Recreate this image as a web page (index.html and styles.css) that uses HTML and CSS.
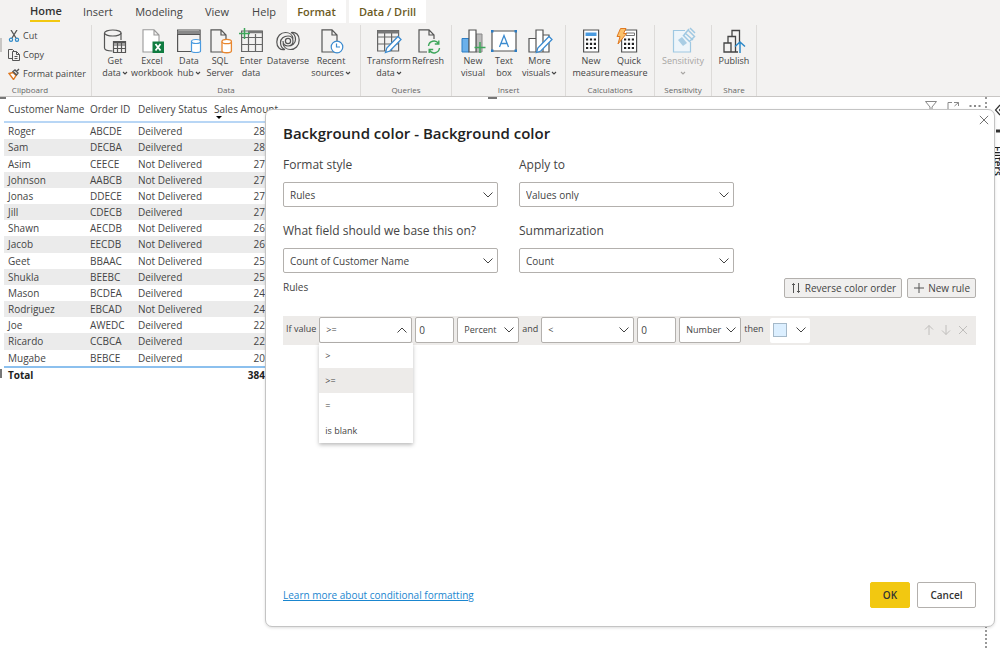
FILE: index.html
```html
<!DOCTYPE html>
<html lang="en">
<head>
<meta charset="utf-8">
<title>Conditional formatting</title>
<link rel="stylesheet" href="styles.css">
</head>
<body>
<svg class="defs" aria-hidden="true">
  <symbol id="chev" viewBox="0 0 12 12"><path d="M1.500 3.500 6 8l4.500-4.500" fill="none" stroke="currentColor"/></symbol>
  <symbol id="chev-up" viewBox="0 0 12 12"><path d="M1.500 8.500 6 4l4.500 4.500" fill="none" stroke="currentColor"/></symbol>
  <symbol id="caret" viewBox="0 0 6 6"><path d="M1 2l2 2 2-2" fill="none" stroke="currentColor" stroke-width="1.100"/></symbol>
</svg>
<header class="ribbon">
  <nav class="tabs" aria-label="Ribbon tabs">
    <button class="tab tab-home">Home</button>
    <button class="tab tab-insert">Insert</button>
    <button class="tab tab-model">Modeling</button>
    <button class="tab tab-view">View</button>
    <button class="tab tab-help">Help</button>
    <button class="tab ctx ctx-format">Format</button>
    <button class="tab ctx ctx-data">Data / Drill</button>
  </nav>
  <div class="groups">
    <section class="group clipboard">
      <span class="paste-edge"></span>
      <div class="stack">
        <button class="mini"><svg viewBox="0 0 12 12"><path d="M3 0l5 8M9 0L4 8" stroke="#555" stroke-width="1.300" fill="none"/><circle cx="3" cy="9.800" r="1.600" stroke="#2b88c8" fill="none" stroke-width="1.200"/><circle cx="9" cy="9.800" r="1.600" stroke="#2b88c8" fill="none" stroke-width="1.200"/></svg>Cut</button>
        <button class="mini"><svg viewBox="0 0 12 12"><path d="M4 9.500H.5V.5h4l1.500 1.500M4.500 2.500h4l3 3v6h-7zM8.500 2.500v3h3M6.500 7.500h3M6.500 9.500h3" stroke="#555" fill="none"/></svg>Copy</button>
        <button class="mini"><svg viewBox="0 0 12 12"><path d="M1 5.500l4-1 3 3-2.500 4z" fill="#fff" stroke="#e07820" stroke-width="1.400"/><path d="M5 3.500l3.500 3.500 1.500-2L7 2zM8.500 3.500L11 1" stroke="#555" fill="none" stroke-width="1.400"/></svg>Format painter</button>
      </div>
      <h2>Clipboard</h2>
    </section>
    <section class="group">
      <div class="tools">
        <button class="tool w30"><svg viewBox="0 0 24 24"><g fill="none" stroke="#555" stroke-width="1.200"><path d="M1.500 4v15c0 2 4 3 8 3M18 4v7"/><ellipse cx="9.800" cy="4" rx="8.300" ry="3"/><path d="M10.500 12.500h12v11h-12zM10.500 16h12M10.500 19.500h12M14.500 12.500v11M18.500 12.500v11"/></g><path d="M10.500 12h12v2.500h-12z" fill="#555"/></svg><span>Get<br>data<svg class="caret"><use href="#caret"/></svg></span></button>
        <button class="tool w44"><svg viewBox="0 0 24 24"><path d="M3 .8h11l5 5.200v17H3zM14 1v5h5" fill="#fff" stroke="#999" stroke-width="1.100"/><path d="M12.500 12.500H24V24H12.500z" fill="#107c41"/><path d="M15.500 15l5 6.500M20.500 15l-5 6.500" stroke="#fff" stroke-width="1.800"/></svg><span>Excel<br>workbook</span></button>
        <button class="tool w30"><svg viewBox="0 0 24 24"><g fill="#f3f2f1" stroke="#555" stroke-width="1.200"><path d="M.6 1h22.500v21.500H.6zM.6 5.500h22.500"/><path d="M.6 3.500h22.500" stroke-width="3" stroke="#888"/></g><path d="M14.500 12.500V22c0 2 9 2 9 0v-9.500" fill="#fff" stroke="#4a9be0" stroke-width="1.200"/><ellipse cx="19" cy="12.500" rx="4.500" ry="2" fill="#fff" stroke="#4a9be0" stroke-width="1.200"/></svg><span>Data<br>hub<svg class="caret"><use href="#caret"/></svg></span></button>
        <button class="tool w32"><svg viewBox="0 0 24 24"><path d="M3 .8h10l5 5.200v17H3zM13 1v5h5" fill="none" stroke="#555" stroke-width="1.200"/><path d="M14 12.500V22c0 2.300 9.400 2.300 9.400 0v-9.500" fill="#fff" stroke="#e8862e" stroke-width="1.300"/><ellipse cx="18.700" cy="12.500" rx="4.700" ry="2.200" fill="#fff" stroke="#e8862e" stroke-width="1.300"/></svg><span>SQL<br>Server</span></button>
        <button class="tool w30"><svg viewBox="0 0 24 24"><path d="M2.600 2h20.800v20.500H2.600zM2.600 8.500h20.800M2.600 15.500h20.800M9.500 5v17.500M16.500 5v17.500" fill="none" stroke="#666" stroke-width="1.200"/><path d="M9 3h14" stroke="#777" stroke-width="2.500"/><path d="M5.500-1v11M0 4.500h11" stroke="#3fa65b" stroke-width="1.500"/></svg><span>Enter<br>data</span></button>
        <button class="tool w44"><svg viewBox="0 0 24 24"><g fill="none" stroke="#555" stroke-width="1.200"><path d="M9 20.500C4 21.500.8 18 .8 13 .8 7 5 3.500 9.500 3.500c4 0 7 2.500 7.500 6M15 3.500c5-1 8.200 2.500 8.200 7.500 0 6-4.200 9.500-8.700 9.500-4 0-7-2.500-7.500-6"/><path d="M9 20.500c-3-1-4.500-3.500-4.500-7C4.500 9.500 8 7 12 7c3 0 5 2 5 5s-2 5-5 5-5-2-5-5M15 3.500c3 1 4.500 3.500 4.500 7 0 4-3.500 6.500-7.500 6.500"/><circle cx="12" cy="12" r="2.600"/></g></svg><span>Dataverse</span></button>
        <button class="tool w42"><svg viewBox="0 0 24 24"><path d="M3 .8h10l5 5.200v17H3zM13 1v5h5" fill="none" stroke="#555" stroke-width="1.200"/><circle cx="18" cy="18" r="5.800" fill="#fff" stroke="#3b8bd0" stroke-width="1.200"/><path d="M17.500 14.500V18h3.500" fill="none" stroke="#3b8bd0" stroke-width="1.200"/></svg><span>Recent<br>sources<svg class="caret"><use href="#caret"/></svg></span></button>
      </div>
      <h2>Data</h2>
    </section>
    <section class="group snug">
      <div class="tools">
        <button class="tool w44"><svg viewBox="0 0 24 24"><path d="M.6 1.500h21v20.500H.6zM.6 8h21M.6 15h21M7.600 4v18M14.600 4v18" fill="none" stroke="#666" stroke-width="1.200"/><path d="M.6 3h21" stroke="#777" stroke-width="3"/><path d="M8.500 23.500l1.300-4.500L21 7.500l3 3L12.800 22z" fill="#fff" stroke="#3b8bd0" stroke-width="1.300"/></svg><span>Transform<br>data<svg class="caret"><use href="#caret"/></svg></span></button>
        <button class="tool w34"><svg viewBox="0 0 24 24"><path d="M3 .8h10l5 5.200v17H3zM13 1v5h5" fill="#f3f2f1" stroke="#555" stroke-width="1.200"/><path d="M11 10h13v14H11z" fill="#f3f2f1"/><path d="M12.500 17a5.500 5.500 0 0110-2.500M22.800 11.500v3.500h-4M23.500 19a5.500 5.500 0 01-10 2.500M13.200 24v-3.500h4" fill="none" stroke="#3fa65b" stroke-width="1.400"/></svg><span>Refresh</span></button>
      </div>
      <h2>Queries</h2>
    </section>
    <section class="group snug">
      <div class="tools">
        <button class="tool w30"><svg viewBox="0 0 24 24"><path d="M1 9.500h7V23H1z" fill="#6bb0ea" stroke="#2b7cc4"/><path d="M15 5h6v18h-6z" fill="#bbb" stroke="#888"/><path d="M8 1h7v22H8z" fill="#fff" stroke="#555" stroke-width="1.200"/><path d="M19 13v11M13.500 18.500h11" stroke="#3fa65b" stroke-width="1.500"/></svg><span>New<br>visual</span></button>
        <button class="tool w32"><svg viewBox="0 0 24 24"><path d="M0 2h24v20H0z" fill="#fff" stroke="#555" stroke-width="1.200"/><path d="M7.500 18L12 6.500 16.500 18M9 14.500h6" fill="none" stroke="#3b8bd0" stroke-width="1.300"/><path d="M-1 1h2.500v2.500H-1zM22.500 1H25v2.500h-2.500zM-1 20.500h2.500V23H-1zM22.500 20.500H25V23h-2.500z" fill="#2b7cc4"/></svg><span>Text<br>box</span></button>
        <button class="tool w39"><svg viewBox="0 0 24 24"><path d="M1 9.500h7V23H1zM8 1h7v22H8zM15 6h6v17h-6z" fill="#fff" stroke="#555" stroke-width="1.200"/><path d="M8.500 23.500l1.300-4.500L21 7.500l3 3L12.800 22z" fill="#fff" stroke="#3b8bd0" stroke-width="1.300"/></svg><span>More<br>visuals<svg class="caret"><use href="#caret"/></svg></span></button>
      </div>
      <h2>Insert</h2>
    </section>
    <section class="group snug">
      <div class="tools">
        <button class="tool w38"><svg viewBox="0 0 24 24"><path d="M4.600 1h15v22h-15z" fill="#fff" stroke="#555" stroke-width="1.200"/><path d="M6.500 3.500h11V7h-11z" fill="#4a9be0"/><path d="M7 10.500h10M7 14.800h10M7 19h10" stroke="#222" stroke-width="2.200" stroke-dasharray="2.200 1.700"/></svg><span>New<br>measure</span></button>
        <button class="tool w38"><svg viewBox="0 0 24 24"><path d="M4.600 1h15v22h-15z" fill="#fff" stroke="#555" stroke-width="1.200"/><path d="M9 4h8.500v2.500H9z" fill="none" stroke="#777"/><path d="M7 10.500h10M7 14.800h10M7 19h10" stroke="#222" stroke-width="2.200" stroke-dasharray="2.200 1.700"/><path d="M3.500-.5H9L6.500 4.500h3L1 15l2-7.500H0z" fill="#fbc16b" stroke="#e07820"/></svg><span>Quick<br>measure</span></button>
      </div>
      <h2>Calculations</h2>
    </section>
    <section class="group snug">
      <div class="tools">
        <button class="tool w44" disabled><svg viewBox="0 0 24 24"><path d="M14 1.500H2.500V23h17V13" fill="#eef5fa" stroke="#9fc8e2" stroke-width="1.200"/><path d="M7 11l4-3 5 6-4 3z" fill="#a9cde4"/><path d="M12 6l7 7M14 4l8 7M17 1l7 7M19-1l5 5M13 6l5-6M19 12l5-5" stroke="#9fc8e2" stroke-width="1.500"/></svg><span>Sensitivity<br><svg class="caret"><use href="#caret"/></svg></span></button>
      </div>
      <h2>Sensitivity</h2>
    </section>
    <section class="group tight">
      <div class="tools">
        <button class="tool w38"><svg viewBox="0 0 24 24"><path d="M2 14h7v9H2zM6 14V7.500h7.500V23M10 7.500v-6h7.500V14M9 23h7" fill="none" stroke="#444" stroke-width="1.300"/><path d="M18 24V13.500M13 17.500l5-4.500 5 4.500" fill="none" stroke="#2b88c8" stroke-width="1.500"/></svg><span>Publish</span></button>
      </div>
      <h2>Share</h2>
    </section>
  </div>
</header>
<main class="workspace">
  <section class="visual">
    <span class="handle handle-tl"></span><span class="handle handle-top"></span><span class="handle handle-left"></span>
    <table class="report">
      <colgroup><col class="c-name"><col class="c-id"><col class="c-status"><col></colgroup>
      <thead><tr><th>Customer Name</th><th>Order ID</th><th>Delivery Status</th><th class="sorted">Sales Amount<svg viewBox="0 0 6 3"><path d="M0 0h6L3 3z"/></svg></th></tr></thead>
      <tbody>
        <tr><td>Roger</td><td>ABCDE</td><td>Deilvered</td><td>28</td></tr>
        <tr><td>Sam</td><td>DECBA</td><td>Deilvered</td><td>28</td></tr>
        <tr><td>Asim</td><td>CEECE</td><td>Not Delivered</td><td>27</td></tr>
        <tr><td>Johnson</td><td>AABCB</td><td>Not Delivered</td><td>27</td></tr>
        <tr><td>Jonas</td><td>DDECE</td><td>Not Delivered</td><td>27</td></tr>
        <tr><td>Jill</td><td>CDECB</td><td>Deilvered</td><td>27</td></tr>
        <tr><td>Shawn</td><td>AECDB</td><td>Not Delivered</td><td>26</td></tr>
        <tr><td>Jacob</td><td>EECDB</td><td>Not Delivered</td><td>26</td></tr>
        <tr><td>Geet</td><td>BBAAC</td><td>Not Delivered</td><td>25</td></tr>
        <tr><td>Shukla</td><td>BEEBC</td><td>Deilvered</td><td>25</td></tr>
        <tr><td>Mason</td><td>BCDEA</td><td>Deilvered</td><td>24</td></tr>
        <tr><td>Rodriguez</td><td>EBCAD</td><td>Not Delivered</td><td>24</td></tr>
        <tr><td>Joe</td><td>AWEDC</td><td>Deilvered</td><td>22</td></tr>
        <tr><td>Ricardo</td><td>CCBCA</td><td>Deilvered</td><td>22</td></tr>
        <tr><td>Mugabe</td><td>BEBCE</td><td>Deilvered</td><td>20</td></tr>
      </tbody>
      <tfoot><tr><td colspan="3">Total</td><td>384</td></tr></tfoot>
    </table>
    <div class="visual-tools">
      <svg viewBox="0 0 12 12"><path d="M.5.500h11L7 6v5L5 10V6z"/></svg>
      <svg viewBox="0 0 12 12"><path d="M5 1.500H1v9h9V8M7 1.500h4.500V5M11.500 1.500L7.500 5"/></svg>
      <svg viewBox="0 0 12 12"><path d="M.5 5h2M5 5h2M9.500 5h2" stroke-width="2"/></svg>
    </div>
  </section>
  <aside class="filters">
    <svg viewBox="0 0 12 12"><path d="M6 1L1.500 6 6 11M10 1L5.500 6l4.500 5"/></svg>
    <svg viewBox="0 0 12 12"><path d="M2 6h8" stroke-width="3"/></svg>
    <span>Filters</span>
  </aside>
</main>
<div class="dialog" role="dialog" aria-labelledby="dlg-title">
  <button class="close" aria-label="Close"><svg viewBox="0 0 12 12"><path d="M1 1l10 10M11 1L1 11"/></svg></button>
  <h1 id="dlg-title">Background color - Background color</h1>
  <div class="fields">
    <div class="field"><label for="style">Format style</label><div class="pick"><select id="style"><option>Rules</option></select><svg><use href="#chev"/></svg></div></div>
    <div class="field"><label for="apply">Apply to</label><div class="pick"><select id="apply"><option>Values only</option></select><svg><use href="#chev"/></svg></div></div>
    <div class="field"><label for="base">What field should we base this on?</label><div class="pick"><select id="base"><option>Count of Customer Name</option></select><svg><use href="#chev"/></svg></div></div>
    <div class="field"><label for="sum">Summarization</label><div class="pick"><select id="sum"><option>Count</option></select><svg><use href="#chev"/></svg></div></div>
  </div>
  <div class="rules-head">
    <h2>Rules</h2>
    <button class="act"><svg viewBox="0 0 12 12"><path d="M3.500 11V1.500M2 3l1.500-1.500M8.500 1v9.500M8.500 10.500L10 9M8.500 10.500L7 9M3.500 1.500L5 3"/></svg>Reverse color order</button>
    <button class="act"><svg viewBox="0 0 12 12"><path d="M6 1v10M1 6h10"/></svg>New rule</button>
  </div>
  <div class="rule">
    <label for="op1">If value</label>
    <div class="pick op"><select id="op1"><option>&gt;=</option></select><svg><use href="#chev-up"/></svg>
      <ul class="menu" role="listbox" aria-label="Operator"><li role="option">&gt;</li><li role="option" class="on" aria-selected="true">&gt;=</li><li role="option">=</li><li role="option">is blank</li></ul>
    </div>
    <input class="num" type="text" value="0" aria-label="Lower value">
    <div class="pick unit"><select aria-label="Lower unit"><option>Percent</option></select><svg><use href="#chev"/></svg></div>
    <label for="op2">and</label>
    <div class="pick op"><select id="op2"><option>&lt;</option></select><svg><use href="#chev"/></svg></div>
    <input class="num" type="text" value="0" aria-label="Upper value">
    <div class="pick unit"><select aria-label="Upper unit"><option>Number</option></select><svg><use href="#chev"/></svg></div>
    <span>then</span>
    <button class="color" aria-label="Color"><i></i><svg><use href="#chev"/></svg></button>
    <div class="order">
      <button disabled aria-label="Move up"><svg viewBox="0 0 12 12"><path d="M6 11V1.500M2 5.500l4-4 4 4"/></svg></button>
      <button disabled aria-label="Move down"><svg viewBox="0 0 12 12"><path d="M6 1v9.500M2 6.500l4 4 4-4"/></svg></button>
      <button disabled aria-label="Delete rule"><svg viewBox="0 0 12 12"><path d="M2 2l8 8M10 2l-8 8"/></svg></button>
    </div>
  </div>
  <footer class="foot">
    <a href="#">Learn more about conditional formatting</a>
    <button class="btn ok">OK</button>
    <button class="btn">Cancel</button>
  </footer>
</div>
</body>
</html>
```
FILE: styles.css
```css
* { box-sizing: border-box; }
body {
  margin: 0;
  height: 100vh;
  display: flex;
  flex-direction: column;
  position: relative;
  overflow: hidden;
  background: #fff;
  color: #444;
  font: 10px/12px "Open Sans", "Noto Sans", sans-serif;
}
button, select, input { font: inherit; color: inherit; margin: 0; }
button { border: 0; padding: 0; background: none; }
h1, h2, ul { margin: 0; padding: 0; font-weight: 400; }
svg { flex: none; }
.defs { position: absolute; width: 0; height: 0; }

/* Ribbon */
.ribbon { background: #f3f2f1; border-bottom: 1px solid #c8c6c4; font-size: 9px; }
.tabs { display: flex; height: 23px; padding-left: 30px; font-size: 11px; }
.tab { height: 23px; white-space: nowrap; }
.tab-home { width: 30px; margin-right: 23px; font-weight: 600; color: #333; border-bottom: 2px solid #f2c811; height: 22px; padding-top: 1px; }
.tab-insert { width: 28px; margin-right: 24px; }
.tab-model { width: 48px; margin-right: 21px; }
.tab-view { width: 26px; margin-right: 21px; }
.tab-help { width: 26px; margin-right: 10px; }
.ctx { background: #fff; color: #6b5a1e; font-weight: 600; }
.ctx-format { width: 59px; margin-right: 3px; }
.ctx-data { width: 77px; }
.groups { display: flex; height: 73px; padding-top: 2px; }
.group {
  display: flex;
  flex-direction: column;
  justify-content: space-between;
  padding: 4px 8px 0;
  border-right: 1px solid #dddbd9;
}
.group h2 { font-size: 8px; line-height: 12px; text-align: center; color: #666; }
.snug { padding: 4px 6px 0; }
.tight { padding: 4px 3px 0; }
.clipboard { width: 92px; position: relative; padding: 1px 0 0 8px; }
.clipboard h2 { width: 44px; }
.stack { display: grid; grid-auto-rows: 19px; }
.mini { display: flex; align-items: center; gap: 3px; white-space: nowrap; }
.mini svg { width: 12px; height: 12px; }
.paste-edge { position: absolute; left: 0; top: 13px; width: 2px; height: 14px; background: #c8c6c4; }
.tools { display: flex; }
.tool { display: flex; flex-direction: column; align-items: center; gap: 2px; white-space: nowrap; }
.tool > svg { width: 24px; height: 24px; overflow: visible; }
.tool > span { min-height: 24px; }
.tool:disabled { color: #a8a6a4; }
.caret { width: 6px; height: 6px; margin-left: 1px; }
.w30 { width: 30px; }
.w32 { width: 32px; }
.w34 { width: 34px; }
.w38 { width: 38px; }
.w39 { width: 39px; }
.w42 { width: 42px; }
.w44 { width: 44px; }

/* Report canvas */
.workspace { flex: 1; display: flex; min-height: 0; }
.visual {
  flex: 1;
  position: relative;
  display: flex;
  justify-content: space-between;
  align-items: flex-start;
  padding: 4px 4px 0;
  border-right: 2px dotted #999;
}
.handle { position: absolute; background: #777; }
.handle-tl { left: 0; top: 0; width: 6px; height: 2px; }
.handle-top { left: 488px; top: 0; width: 9px; height: 2px; }
.handle-left { left: 0; top: 272px; width: 2px; height: 9px; }
.report { width: 261px; height: 281px; table-layout: fixed; border-collapse: collapse; white-space: nowrap; }
.report th, .report td { padding: 0 0 0 4px; text-align: left; font-weight: 400; line-height: 14px; }
.report th { height: 21px; padding-bottom: 5px; border-bottom: 2px solid #b8d6f5; }
.c-name { width: 82px; }
.c-id { width: 48px; }
.c-status { width: 76px; }
.sorted { position: relative; }
.sorted svg { position: absolute; left: 6px; bottom: 2px; width: 6px; height: 3px; }
.report tbody tr:nth-child(even) { background: #ebebeb; }
.report td:last-child { text-align: right; }
.report tfoot td { font-weight: 700; color: #222; border-top: 2px solid #8cc0ee; height: 15px; }
.visual-tools { display: flex; gap: 10px; }
.visual-tools svg { width: 12px; height: 12px; fill: none; stroke: #888; }
.filters { width: 13px; padding: 7px 0 0 7px; display: flex; flex-direction: column; align-items: flex-start; gap: 9px; overflow: hidden; font-size: 10px; font-weight: 600; color: #222; }
.filters svg { width: 12px; height: 12px; fill: none; stroke: #333; stroke-width: 1.2; }
.filters span { writing-mode: vertical-rl; line-height: 8px; white-space: nowrap; }

/* Dialog */
.dialog {
  position: absolute;
  inset: 109px 5px 21px 265px;
  display: flex;
  flex-direction: column;
  padding: 13px 18px 18px 17px;
  background: #fff;
  border: 1px solid #c4c4c4;
  border-radius: 7px;
  box-shadow: 0 1px 3px #0002;
}
.close { position: absolute; top: 5px; right: 5px; width: 10px; height: 10px; }
.close svg { display: block; width: 10px; height: 10px; fill: none; stroke: #555; }
h1 { font-size: 15px; line-height: 20px; font-weight: 600; color: #222; }
.fields { display: grid; grid-template-columns: 215px 215px; column-gap: 21px; row-gap: 16px; padding-top: 14px; }
.field { display: grid; gap: 9px; }
.field label { font-size: 12px; line-height: 16px; }
.pick { display: grid; position: relative; align-items: center; }
.pick > select, .pick > svg { grid-area: 1 / 1; }
.pick > select { appearance: none; width: 100%; height: 25px; padding: 0 6px; background: #fff; border: 1px solid #b3b0ad; border-radius: 2px; font-size: 10px; }
.pick > svg { justify-self: end; margin-right: 4px; width: 12px; height: 12px; pointer-events: none; }
.rules-head { display: flex; align-items: center; gap: 5px; padding-top: 5px; }
.rules-head h2 { flex: 1; align-self: flex-start; font-size: 10px; line-height: 18px; }
.act { display: flex; align-items: center; justify-content: center; gap: 3px; height: 20px; padding: 0 5px; background: #f0efee; border: 1px solid #b3b0ad; border-radius: 2px; }
.act svg { width: 12px; height: 12px; fill: none; stroke: #555; }
.rule { display: flex; align-items: center; gap: 3px; height: 29px; margin-top: 18px; padding: 0 3px 1px; background: #edebe9; font-size: 9px; }
.rule label, .rule > span { padding-bottom: 2px; white-space: nowrap; }
.rule .pick > select { height: 26px; font-size: 9px; }
.op { width: 93px; }
.unit { width: 62px; }
.num { width: 39px; height: 26px; padding: 0 3px; background: #fff; border: 1px solid #b3b0ad; border-radius: 2px; font-size: 10px; }
.menu { position: absolute; top: 26px; left: 0; width: 94px; list-style: none; background: #fff; box-shadow: 0 2px 4px #0004; }
.menu li { padding: 0 6px; line-height: 25px; }
.menu .on { background: #edebe9; }
.color { display: flex; align-items: center; justify-content: space-between; width: 40px; height: 25px; margin-left: 3px; padding: 0 3px; background: #fff; border-radius: 2px; }
.color i { width: 14px; height: 14px; background: #dcefff; border: 1px solid #a5b9c9; }
.color svg { width: 12px; height: 12px; }
.order { display: flex; gap: 5px; margin: 0 4px 0 auto; }
.order svg { display: block; width: 12px; height: 12px; fill: none; stroke: #c0bebc; }
.foot { display: flex; align-items: center; gap: 7px; margin-top: auto; }
.foot a { margin-right: auto; color: #1a86cf; }
.btn { min-width: 59px; height: 26px; border: 1px solid #b3b0ad; border-radius: 2px; background: #fff; color: #333; font-weight: 600; }
.ok { min-width: 40px; background: #f2c811; border-color: #f2c811; }
```
